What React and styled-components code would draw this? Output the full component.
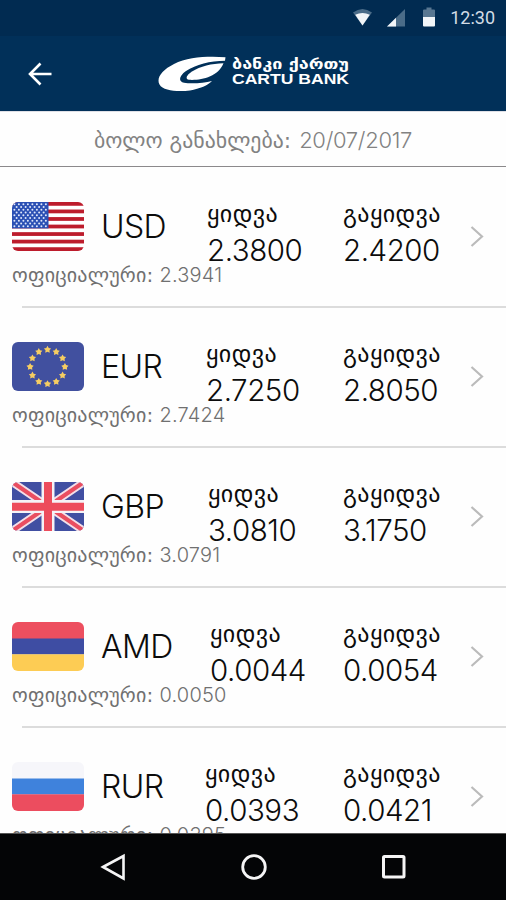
import React from 'react'
import styled, { createGlobalStyle } from 'styled-components'

const GlobalStyle = createGlobalStyle`
* { box-sizing: border-box; }
body {
  margin: 0;
  background: #fff;
}
`

const Screen = styled.div`
width: 506px;
height: 900px;
display: flex;
flex-direction: column;
overflow: hidden;
background: #fefefe;
color: #0c0c0c;
font-family: Inter, "DejaVu Sans", sans-serif;
`

const StatusBar = styled.div`
height: 36px;
flex: none;
display: flex;
align-items: center;
justify-content: flex-end;
padding-right: 11px;
background: #012b51;
`

const Clock = styled.span`
margin-left: 12px;
font-family: Roboto, sans-serif;
font-size: 18px;
line-height: 36px;
color: #d3dce5;
`

const Header = styled.header`
height: 75px;
flex: none;
display: flex;
align-items: center;
padding: 0 0 0 26px;
background: #013059;
`

const Logo = styled.svg`
margin-left: 104px;
`

const Updated = styled.div`
height: 56px;
flex: none;
display: flex;
justify-content: center;
padding-top: 14px;
border-top: 1px solid #dfe0e6;
border-bottom: 1px solid #8b898b;
color: #828282;
line-height: 29px;
white-space: nowrap;
`

const Geo = styled.span`
font-family: "DejaVu Sans", sans-serif;
font-weight: ${p => p.$weight || 400};
font-size: ${p => p.$size}px;
letter-spacing: ${p => p.$track || 0}px;
`

const Num = styled.span`
font-family: Inter, sans-serif;
font-weight: ${p => p.$weight || 400};
font-size: ${p => p.$size}px;
letter-spacing: ${p => p.$track || 0}px;
margin-left: ${p => p.$gap || 0}px;
`

const List = styled.main`
flex: 1;
min-height: 0;
overflow: hidden;
`

const Row = styled.section`
height: 140px;
padding: 32px 0 0 12px;
`

const RowMain = styled.div`
display: grid;
grid-template-columns: 72px ${p => p.$code}px ${p => 259 - p.$code}px 127px 20px;
height: 65px;
`

const Flag = styled.svg`
display: block;
margin-top: 3px;
width: 72px;
height: 49px;
border-radius: 6px;
`

const Code = styled.div`
padding: 8px 0 0 17px;
font-size: 32px;
font-weight: 350;
line-height: 40px;
letter-spacing: -0.6px;
`

const Price = styled.div`
display: flex;
flex-direction: column;
white-space: nowrap;
`

const PriceLabel = styled(Geo)`
height: 33px;
line-height: 31px;
`

const PriceValue = styled(Num)`
line-height: 36px;
`

const Chevron = styled.svg`
margin-top: 25px;
`

const Official = styled.div`
height: 22px;
line-height: 22px;
color: #707070;
white-space: nowrap;
`

const Divider = styled.div`
height: 2px;
margin: 20px 0 0 10px;
background: #dcdcdc;
`

const NavBar = styled.nav`
height: 67px;
flex: none;
display: flex;
justify-content: space-between;
align-items: center;
padding: 0 97px 0 98px;
background: #040506;
border-top: 1px solid #555;
`

const starPath = (cx, cy, r) => {
  let d = ''
  for (let i = 0; i < 10; i++) {
    const a = (Math.PI / 5) * i - Math.PI / 2
    const k = i % 2 ? r * 0.55 : r
    d += `${i ? 'L' : 'M'}${cx + k * Math.cos(a)} ${cy + k * Math.sin(a)}`
  }
  return d + 'Z'
}

const UsdFlag = () => {
  const dots = []
  for (let y = 0; y < 9; y++) {
    for (let x = 0; x < (y % 2 ? 7 : 8); x++) {
      dots.push(<circle key={`${x}-${y}`} cx={2.4 + x * 4.5 + (y % 2 ? 2.25 : 0)} cy={2.3 + y * 2.75} r="1" />)
    }
  }
  return (
    <Flag viewBox="0 0 72 49">
      <rect width="72" height="49" fill="#fff" />
      {[0, 1, 2, 3, 4, 5, 6].map(i => (
        <rect key={i} y={i * 7.54} width="72" height="3.77" fill="#bd1c2c" />
      ))}
      <rect width="36.5" height="26.4" fill="#2b50b4" />
      <g fill="#dfe6fa">{dots}</g>
    </Flag>
  )
}

const EurFlag = () => (
  <Flag viewBox="0 0 72 49">
    <rect width="72" height="49" fill="#41509f" />
    {Array.from({ length: 12 }, (_, i) => (
      <path
        key={i}
        d={starPath(35.5 + 17.4 * Math.sin((i * Math.PI) / 6), 24.8 - 17.2 * Math.cos((i * Math.PI) / 6), 3.8)}
        fill="#f6cd62"
      />
    ))}
  </Flag>
)

const GbpFlag = () => (
  <Flag viewBox="0 0 72 49">
    <rect width="72" height="49" fill="#414fa2" />
    <path d="M0 0L72 49M72 0L0 49" stroke="#f3dfe8" strokeWidth="8" />
    <path d="M0 0L72 49M72 0L0 49" stroke="#e94e61" strokeWidth="4.2" />
    <path d="M36 0V49M0 24.5H72" stroke="#f5f2f6" strokeWidth="13" />
    <path d="M36 0V49M0 24.8H72" stroke="#ed4c5c" strokeWidth="8" />
  </Flag>
)

const stripes = (a, b, c) => () => (
  <Flag viewBox="0 0 72 49">
    <rect width="72" height="17" fill={a} />
    <rect y="16.5" width="72" height="16" fill={b} />
    <rect y="32.3" width="72" height="17" fill={c} />
  </Flag>
)

const AmdFlag = stripes('#ed4f5f', '#3e4da3', '#fdcc54')
const RurFlag = stripes('#f6f6fa', '#3f82dc', '#ec4d5f')

// col is the width of the currency code column, up to the buy price
const rates = [
  { code: 'USD', flag: UsdFlag, buy: '2.3800', sell: '2.4200', official: '2.3941', col: 123 },
  { code: 'EUR', flag: EurFlag, buy: '2.7250', sell: '2.8050', official: '2.7424', col: 122 },
  { code: 'GBP', flag: GbpFlag, buy: '3.0810', sell: '3.1750', official: '3.0791', col: 124 },
  { code: 'AMD', flag: AmdFlag, buy: '0.0044', sell: '0.0054', official: '0.0050', col: 126 },
  { code: 'RUR', flag: RurFlag, buy: '0.0393', sell: '0.0421', official: '0.0395', col: 121 },
]

const RateRow = ({ rate }) => (
  <Row>
    <RowMain $code={rate.col}>
      <rate.flag />
      <Code>{rate.code}</Code>
      <Price>
        <PriceLabel $size={24} $track={0.4}>ყიდვა</PriceLabel>
        <PriceValue $size={29.5} $weight={350} $track={-0.45}>{rate.buy}</PriceValue>
      </Price>
      <Price>
        <PriceLabel $size={24} $track={0.4}>გაყიდვა</PriceLabel>
        <PriceValue $size={29.5} $weight={350} $track={-0.45}>{rate.sell}</PriceValue>
      </Price>
      <Chevron width="14" height="24" viewBox="0 0 14 24" fill="none" stroke="#bbb" strokeWidth="2.2">
        <path d="M1.5 3L12 12.5L1.5 22" />
      </Chevron>
    </RowMain>
    <Official>
      <Geo $size={20} $track={0.2}>ოფიციალური:</Geo>
      <Num $size={20} $weight={300} $track={0.2} $gap={6}>{rate.official}</Num>
    </Official>
    <Divider />
  </Row>
)

const App = () => (
  <>
    <GlobalStyle />
    <Screen>
      <StatusBar>
        <svg width="86" height="36" viewBox="0 0 86 36">
          <path d="M1 12.5Q10.5 5.5 20 12.5L10.5 25.5Z" fill="#4b6c88" />
          <path d="M3.2 14.8Q10.5 11 17.8 14.8L10.5 25.5Z" fill="#f2f5f8" />
          <path d="M35 26.5H53V9Z" fill="#4b6c88" />
          <path d="M35 26.5H44V17.8Z" fill="#f2f5f8" />
          <path d="M71 17.5V10.5Q71 9.5 72 9.5H74.5V7.5H79.5V9.5H82Q83 9.5 83 10.5V17.5Z" fill="#597791" />
          <path d="M71 17H83V25.5Q83 26.5 82 26.5H72Q71 26.5 71 25.5Z" fill="#f2f5f8" />
        </svg>
        <Clock>12:30</Clock>
      </StatusBar>
      <Header>
        <svg width="28" height="24" viewBox="0 0 28 24" fill="none" stroke="#fff" strokeWidth="2.6">
          <path d="M25.5 12H4M14.500 1.500L4 12L14.500 22.500" />
        </svg>
        <Logo width="192" height="37" viewBox="0 0 192 37">
          <path
            d="M67.5 2.300C50 1 30 2 16 9C4 15 -2 23 1.500 29.500C5 36 20 37 32 35.500C42 33.500 50 30.500 54 26C46 28 34 29 26 27.800C20 26.500 21 21 28 16C38 9.500 52 6 67 5.800Z"
            fill="#fff"
          />
          <path d="M65.500 8.300C54 8.500 42 11.500 34 16.500C28 20.500 27 24 31 24.800C43 25.500 60 22 65.500 8.300Z" fill="#fff" />
          <text x="74" y="13.5" textLength="117" lengthAdjust="spacingAndGlyphs" fontFamily="DejaVu Sans" fontWeight="700" fontSize="14" fill="#fff">ბანკი ქართუ</text>
          <text x="74" y="28.5" textLength="117" lengthAdjust="spacingAndGlyphs" fontFamily="Liberation Sans" fontWeight="700" fontSize="14.5" fill="#fff">CARTU BANK</text>
        </Logo>
      </Header>
      <Updated>
        <Geo $size={21.8}>ბოლო განახლება:</Geo>
        <Num $size={22} $weight={300} $track={-0.3} $gap={8}>20/07/2017</Num>
      </Updated>
      <List>
        {rates.map(r => <RateRow key={r.code} rate={r} />)}
      </List>
      <NavBar>
        <svg width="30" height="30" viewBox="0 0 30 30" fill="none" stroke="#f5f5f5" strokeWidth="2.6">
          <path d="M5 15L25.5 4V26.5Z" />
        </svg>
        <svg width="30" height="30" viewBox="0 0 30 30" fill="none" stroke="#f5f5f5" strokeWidth="2.8">
          <circle cx="15" cy="15" r="11.3" />
        </svg>
        <svg width="30" height="30" viewBox="0 0 30 30" fill="none" stroke="#f5f5f5" strokeWidth="3">
          <rect x="4.5" y="4.5" width="20.5" height="20.5" rx="1" />
        </svg>
      </NavBar>
    </Screen>
  </>
)

export default App
